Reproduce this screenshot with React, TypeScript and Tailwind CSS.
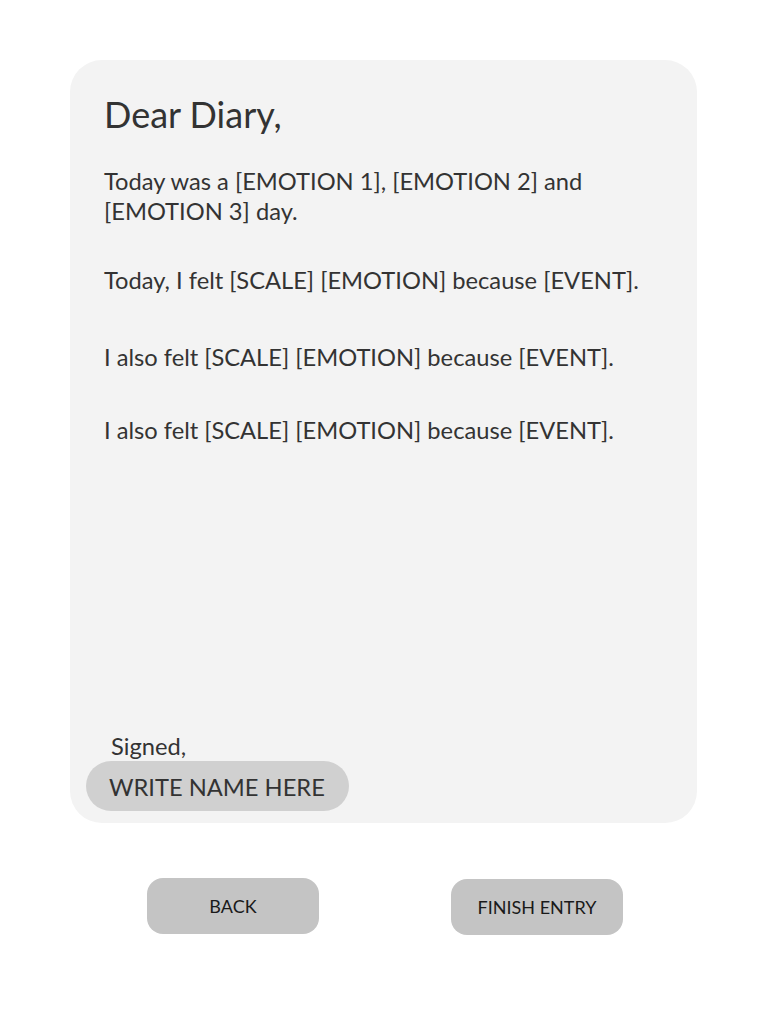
export default function App() {
  const font = { fontFamily: '"Lato", "Noto Sans", sans-serif' };
  return (
    <div className="w-[768px] h-[1024px] bg-white text-[#333333]" style={font}>
      <div className="pt-[60px] pl-[70px]">
        <div className="w-[627px] h-[763px] rounded-[32px] bg-[#f3f3f3] flex flex-col">
          <div className="pl-[34px] pt-[33px] pr-[40px]">
            <h1 className="text-[36px] leading-[43px] font-normal">Dear Diary,</h1>
            <p className="mt-[30px] text-[23.7px] leading-[30px]">
              Today was a [EMOTION 1], [EMOTION 2] and
              <br />
              [EMOTION 3] day.
            </p>
            <p className="mt-[39px] text-[23.7px] leading-[30px] whitespace-nowrap">
              Today, I felt [SCALE] [EMOTION] because [EVENT].
            </p>
            <p className="mt-[47px] text-[23.7px] leading-[30px]">
              I also felt [SCALE] [EMOTION] because [EVENT].
            </p>
            <p className="mt-[43px] text-[23.7px] leading-[30px]">
              I also felt [SCALE] [EMOTION] because [EVENT].
            </p>
          </div>
          <div className="mt-auto pb-[12px] pl-[16px]">
            <p className="pl-[25px] text-[23.7px] leading-[30px]">Signed,</p>
            <div className="w-[263px] h-[50px] rounded-full bg-[#d0d0d0] flex items-center pl-[23px] pt-[4px] text-[23.7px]">
              WRITE NAME HERE
            </div>
          </div>
        </div>
      </div>
      <div className="flex pl-[147px] pt-[55px] gap-[132px]">
        <button className="w-[172px] h-[56px] rounded-[16px] bg-[#c4c4c4] text-[18px] text-[#1a1a1a] flex items-center justify-center">
          BACK
        </button>
        <button className="mt-[1px] w-[172px] h-[56px] rounded-[16px] bg-[#c4c4c4] text-[18px] text-[#1a1a1a] flex items-center justify-center">
          FINISH ENTRY
        </button>
      </div>
    </div>
  );
}
